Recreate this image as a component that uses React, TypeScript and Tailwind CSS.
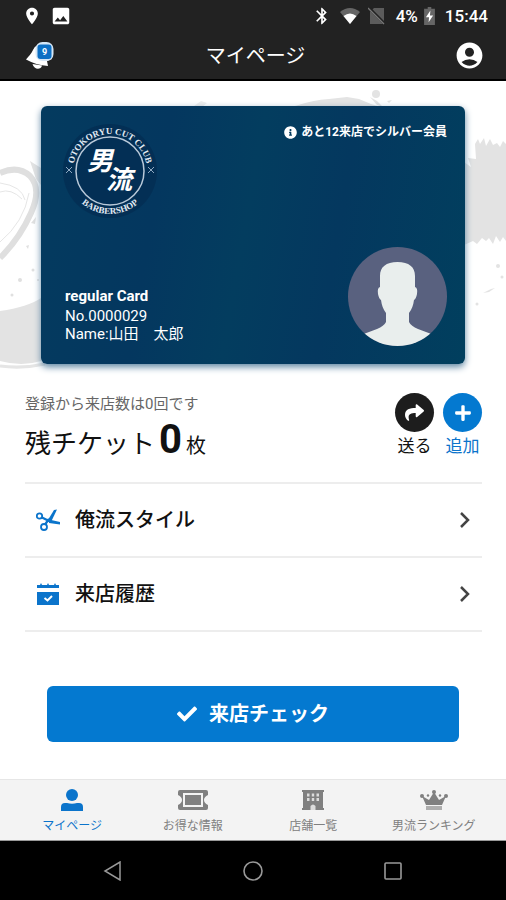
import { useState } from 'react';
import type { ReactNode } from 'react';
import { MdAccountCircle, MdBluetooth, MdImage, MdPlace } from 'react-icons/md';
import { FaCheck, FaInfoCircle, FaPlus, FaShare } from 'react-icons/fa';

type TabId = 'mypage' | 'info' | 'shops' | 'ranking';

function StatusBar() {
  return (
    <div className="flex h-8 items-center justify-between pl-[22px] pr-[18px] text-white">
      <div className="flex items-center gap-2">
        <MdPlace className="size-5" />
        <MdImage className="size-[22px]" />
      </div>
      <div className="flex items-center text-[17px] font-medium leading-5">
        <MdBluetooth className="size-5" />
        <svg viewBox="0 0 20 16" className="ml-2 h-4 w-5">
          <path d="M0 4Q10-4 20 4L10 16Z" fill="#666" />
          <path d="M3.500 8Q10 3 16.500 8L10 16Z" fill="#fff" />
        </svg>
        <svg viewBox="0 0 18 18" className="ml-2 size-[18px]">
          <path d="M6 1H16V17H2V5Z" fill="#5c5c5c" />
          <path d="M1 1L17 17" stroke="#222" strokeWidth="3" />
          <path d="M0 1L16 17" stroke="#777" strokeWidth="1.300" />
        </svg>
        <span className="ml-2.5">4%</span>
        <svg viewBox="0 0 12 20" className="ml-1.5 h-[18px] w-[11px]">
          <path d="M4 0H8V2H12V20H0V2H4Z" fill="#666" />
          <path d="M7 4L2 11.500H5.500L5 17L10 9.500H6.500Z" fill="#fff" />
        </svg>
        <span className="ml-2.5">15:44</span>
      </div>
    </div>
  );
}

function BellIcon() {
  return (
    <svg viewBox="0 0 30 28" className="h-7 w-[30px]">
      <g fill="#fff">
        <path d="M0 17.500C3 14 5 12 7 8Q9 4 13 2L26 17L21 19L22 24Q10 23 0 17.500Z" />
        <path d="M6.500 22L16 23.500C15 28 8 28 6.500 22Z" />
      </g>
      <rect x="9.500" y="0" width="18" height="19" rx="7" fill="#d5e6f5" />
      <rect x="11.500" y="2.500" width="14" height="14.500" rx="3" fill="#0c6fc4" />
      <text x="18.500" y="13" textAnchor="middle" fontSize="9" fontWeight="700" fill="#fff">9</text>
    </svg>
  );
}

function BrushBackground() {
  return (
    <div className="pointer-events-none absolute inset-x-0 top-0 flex justify-between">
      <svg viewBox="0 0 253 300" className="h-[300px] w-[253px]" fill="none">
        <path d="M0 92Q18 84 30 95Q42 108 31 132Q20 157 0 177" stroke="#dfdfdf" strokeWidth="6" />
        <path d="M0 102Q22 105 25 119M0 161Q24 141 29 112M0 111Q11 107 22 118" stroke="#e6e6e6" />
        <path d="M30 80L41 87V104L36 98Z" fill="#e2e2e2" />
        <path d="M0 230Q28 226 41 217V280Q22 286 0 280Z" fill="#e3e3e3" />
        <path d="M0 285Q22 288 45 283" stroke="#e5e5e5" strokeWidth="3" />
        <g fill="#e0e0e0">
          <path d="M31 142L36 136L35 143ZM26 165L29 164L28 168Z" />
          <circle cx="20" cy="199" r="2" />
          <circle cx="12" cy="214" r="1.500" />
          <circle cx="33" cy="189" r="1.500" />
          <circle cx="38" cy="199" r="1" />
        </g>
        <path d="M194 25L201 20L207 22L202 26Z" fill="#eee" />
      </svg>
      <svg viewBox="0 0 253 300" className="h-[300px] w-[253px]" fill="#e3e3e3">
        <path d="M42 25Q60 19 76 18L94 16L106 18L118 23L128 26L128 33H48Z" />
        <circle cx="123" cy="13" r="4" />
        <path d="M117 16L124 20L130 26L124 24ZM134 20L139 19L136 22Z" />
        <path d="M211 81L218 86L215 77L223 78L222 63L225 58L227 63L231 57L233 65L237 58L240 64L244 62L247 66L250 60L253 63V160L250 156L247 161L243 155L240 163L236 157L233 160L229 157L224 163L220 160L211 164Z" />
        <circle cx="245" cy="185" r="2" />
        <circle cx="249" cy="196" r="1.500" />
        <circle cx="224" cy="223" r="1.500" />
        <path d="M230 212L238 208L242 207L236 211Z" />
      </svg>
    </div>
  );
}

function ClubLogo() {
  return (
    <svg viewBox="0 0 94 94" className="ml-1 size-[94px]" role="img" aria-label="男流">
      <defs>
        <path id="arc-top" d="M10 47A37 37 0 0 1 84 47" />
        <path id="arc-bottom" d="M4 47A43 43 0 0 0 90 47" />
      </defs>
      <circle cx="47" cy="47" r="47" fill="#04294f" opacity=".6" />
      <circle cx="47" cy="47" r="34" fill="none" stroke="#b9c9d9" strokeWidth="1.500" />
      <path d="M3 43L9 49M9 43L3 49M85 43L91 49M91 43L85 49" stroke="#8fa9c2" />
      <text fill="#e3ebf3" fontFamily="'Liberation Serif', serif" fontSize="9" fontWeight="700" textAnchor="middle">
        <textPath href="#arc-top" startOffset="50%">OTOKORYU CUT CLUB</textPath>
        <textPath href="#arc-bottom" startOffset="50%">BARBERSHOP</textPath>
      </text>
      <text fill="#fff" fontFamily="'Noto Sans CJK JP', sans-serif" fontSize="26" fontWeight="700" fontStyle="italic">
        <tspan x="24" y="46">男</tspan>
        <tspan x="43" y="65">流</tspan>
      </text>
    </svg>
  );
}

function Avatar() {
  return (
    <svg viewBox="0 0 99 99" className="size-[99px] shrink-0 rounded-full">
      <rect width="99" height="99" fill="#59617f" />
      <path
        d="M49.500 15C38 15 32 20 32 29V40Q29 41 30 47Q31 52 33 53Q34 61 38 66V75Q36 79 29 82L13 88V99H86V88L70 82Q63 79 61 75V66Q65 61 66 53Q68 52 69 47Q70 41 67 40V29C67 20 61 15 49.500 15Z"
        fill="#e9eeed"
      />
    </svg>
  );
}

function MemberCard() {
  return (
    <section className="relative mx-[41px] flex h-[258px] flex-col justify-between rounded-md bg-linear-[100deg,#043b5f_0%,#04375f_28%,#033d5f_48%,#04385f_68%,#013f5e_100%] p-[18px] text-white shadow-[0_3px_7px_#5f86a3]">
      <div className="flex items-start justify-between">
        <ClubLogo />
        <p className="flex items-center gap-1 text-xs font-bold leading-4">
          <FaInfoCircle className="size-[13px]" />
          あと12来店でシルバー会員
        </p>
      </div>
      <div className="flex items-end justify-between">
        <div className="mb-[3px] ml-1.5 text-[15px] leading-[18px]">
          <h2 className="mb-0.5 font-bold">regular Card</h2>
          <p>No.0000029</p>
          <p>Name:山田　太郎</p>
        </div>
        <Avatar />
      </div>
    </section>
  );
}

function ScissorsIcon() {
  return (
    <svg viewBox="0 0 24 22" className="h-[22px] w-6" fill="none" stroke="#0b74cb">
      <circle cx="3.500" cy="7" r="2.700" strokeWidth="1.800" />
      <circle cx="8" cy="18" r="3" strokeWidth="1.800" />
      <path d="M6 8.500L14 12.500M9 15.500L13 10" strokeWidth="2.200" />
      <path d="M11 12.500L18 1L21 .5L15 13Z" fill="#0b74cb" stroke="none" />
      <path d="M13 10.500L24 13V15.500L13 14Z" fill="#0b74cb" stroke="none" />
    </svg>
  );
}

function CalendarIcon() {
  return (
    <svg viewBox="0 0 24 22" className="h-[22px] w-6" fill="#0b74cb">
      <path d="M1 2H4L5 0L6 2H11L12 0L13 2H18L19 0L20 2H23V5H1Z" />
      <path d="M1 9H23V22H1Z" />
      <path d="M8.500 15L11.500 17.500L16 13" fill="none" stroke="#fff" strokeWidth="2" />
    </svg>
  );
}

function MenuRow({ icon, label }: { icon: ReactNode; label: string }) {
  return (
    <li className="border-b-2 border-[#ededed]">
      <a href="#" className="flex h-[72px] items-center pl-[11px] pr-3">
        {icon}
        <span className="ml-[15px] flex-1 text-xl font-medium leading-6 text-[#111]">{label}</span>
        <svg viewBox="0 0 10 16" className="h-4 w-2.5" fill="none" stroke="#444" strokeWidth="2.500">
          <path d="M1 1L8 8L1 15" />
        </svg>
      </a>
    </li>
  );
}

function TicketAction({ icon, label, circle, text }: { icon: ReactNode; label: string; circle: string; text: string }) {
  return (
    <button type="button" className={`flex flex-col items-center gap-1 text-[17px] leading-5 ${text}`}>
      <span className={`flex size-[39px] items-center justify-center rounded-full text-white ${circle}`}>{icon}</span>
      {label}
    </button>
  );
}

const TABS: { id: TabId; label: string; icon: ReactNode }[] = [
  {
    id: 'mypage',
    label: 'マイページ',
    icon: (
      <svg viewBox="0 0 22 22" className="h-[22px] w-[22px]" fill="currentColor">
        <circle cx="11" cy="6" r="6" />
        <path d="M0 22V18Q0 14 4 14H6Q11 15.500 16 14H18Q22 14 22 18V22Z" />
      </svg>
    ),
  },
  {
    id: 'info',
    label: 'お得な情報',
    icon: (
      <svg viewBox="0 0 30 20" className="h-5 w-[30px]" fill="currentColor">
        <path
          fillRule="evenodd"
          d="M2 0H28Q30 0 30 2V5Q26 7 26 10Q26 13 30 15V18Q30 20 28 20H2Q0 20 0 18V15Q4 13 4 10Q4 7 0 5V2Q0 0 2 0ZM5 3V17H25V3Z"
        />
        <path d="M7 5H23V15H7Z" />
      </svg>
    ),
  },
  {
    id: 'shops',
    label: '店舗一覧',
    icon: (
      <svg viewBox="0 0 22 20" className="h-5 w-[22px]">
        <path d="M0 0H22V2H21V18H22V20H0V18H1V2H0Z" fill="currentColor" />
        <path d="M5 3.500H7.500V6.500H5ZM9.800 3.500H12.200V6.500H9.800ZM14.500 3.500H17V6.500H14.500ZM5 8H7.500V11H5ZM9.800 8H12.200V11H9.800ZM14.500 8H17V11H14.500ZM8.500 20V16Q11 13 13.500 16V20Z" fill="#dcdcdc" />
      </svg>
    ),
  },
  {
    id: 'ranking',
    label: '男流ランキング',
    icon: (
      <svg viewBox="0 0 28 20" className="h-5 w-7" fill="currentColor">
        <path d="M6 15L2 6L9 10L14 2L19 10L26 6L22 15Z" />
        <circle cx="2" cy="6" r="2" />
        <circle cx="8" cy="5.500" r="1.200" />
        <circle cx="14" cy="2" r="2" />
        <circle cx="20" cy="5.500" r="1.200" />
        <circle cx="26" cy="6" r="2" />
        <path d="M6 16H22V20H6Z" opacity=".6" />
      </svg>
    ),
  },
];

export default function App() {
  const [tab, setTab] = useState<TabId>('mypage');

  return (
    <div className="flex min-h-screen flex-col bg-white font-[Roboto,'Noto_Sans_CJK_JP',sans-serif] text-[#111]">
      <header className="border-b-2 border-black bg-[#222]">
        <StatusBar />
        <div className="grid h-[47px] grid-cols-[1fr_auto_1fr] items-center pl-[26px] pr-[21px] text-white">
          <button type="button" aria-label="お知らせ" className="justify-self-start">
            <BellIcon />
          </button>
          <h1 className="text-xl leading-6">マイページ</h1>
          <button type="button" aria-label="アカウント" className="justify-self-end">
            <MdAccountCircle className="size-[31px]" />
          </button>
        </div>
      </header>

      <main className="relative flex-1 pt-[25px]">
        <BrushBackground />
        <MemberCard />

        <section className="mt-[29px] flex items-start justify-between pl-[25px] pr-6">
          <div className="pt-px">
            <p className="text-[15px] leading-5 text-[#666]">登録から来店数は0回です</p>
            <p className="mt-1.5 flex items-baseline leading-10">
              <span className="text-[26px]">残チケット</span>
              <strong className="ml-1 mr-1 text-[40px]">0</strong>
              <span className="text-xl">枚</span>
            </p>
          </div>
          <div className="flex gap-[9px]">
            <TicketAction icon={<FaShare className="size-[19px]" />} label="送る" circle="bg-[#1d1d1d]" text="text-[#111]" />
            <TicketAction icon={<FaPlus className="size-[18px]" />} label="追加" circle="bg-[#0479d0]" text="text-[#0b74cb]" />
          </div>
        </section>

        <ul className="ml-[25px] mr-6 mt-[18px] border-t-2 border-[#ededed]">
          <MenuRow icon={<ScissorsIcon />} label="俺流スタイル" />
          <MenuRow icon={<CalendarIcon />} label="来店履歴" />
        </ul>

        <div className="mt-[54px] px-[47px]">
          <button type="button" className="flex h-14 w-full items-center justify-center gap-3 rounded-md bg-[#0479d0] text-xl font-bold leading-6 text-white">
            <FaCheck className="size-5" />
            来店チェック
          </button>
        </div>
      </main>

      <nav className="grid h-[62px] grid-cols-4 border-b border-t border-b-[#999] border-t-[#e6e6e6] bg-[#f3f3f3] px-3">
        {TABS.map((t) => (
          <button
            key={t.id}
            type="button"
            onClick={() => setTab(t.id)}
            className={`flex flex-col items-center pt-2 text-xs leading-4 ${tab === t.id ? 'text-[#0b74cb]' : 'text-[#808080]'}`}
          >
            <span className="mb-1.5 flex h-6 items-center">{t.icon}</span>
            {t.label}
          </button>
        ))}
      </nav>

      <footer className="flex h-[59px] items-center justify-around bg-black px-[43px] text-[#999]">
        <button type="button" aria-label="戻る">
          <svg viewBox="0 0 20 20" className="size-5" fill="none" stroke="currentColor" strokeWidth="1.500">
            <path d="M17 1V19L2 10Z" />
          </svg>
        </button>
        <button type="button" aria-label="ホーム">
          <svg viewBox="0 0 20 20" className="size-5" fill="none" stroke="currentColor" strokeWidth="1.600">
            <circle cx="10" cy="10" r="9" />
          </svg>
        </button>
        <button type="button" aria-label="アプリ履歴">
          <svg viewBox="0 0 20 20" className="size-5" fill="none" stroke="currentColor" strokeWidth="1.600">
            <rect x="2" y="2" width="16" height="16" rx="1" />
          </svg>
        </button>
      </footer>
    </div>
  );
}
